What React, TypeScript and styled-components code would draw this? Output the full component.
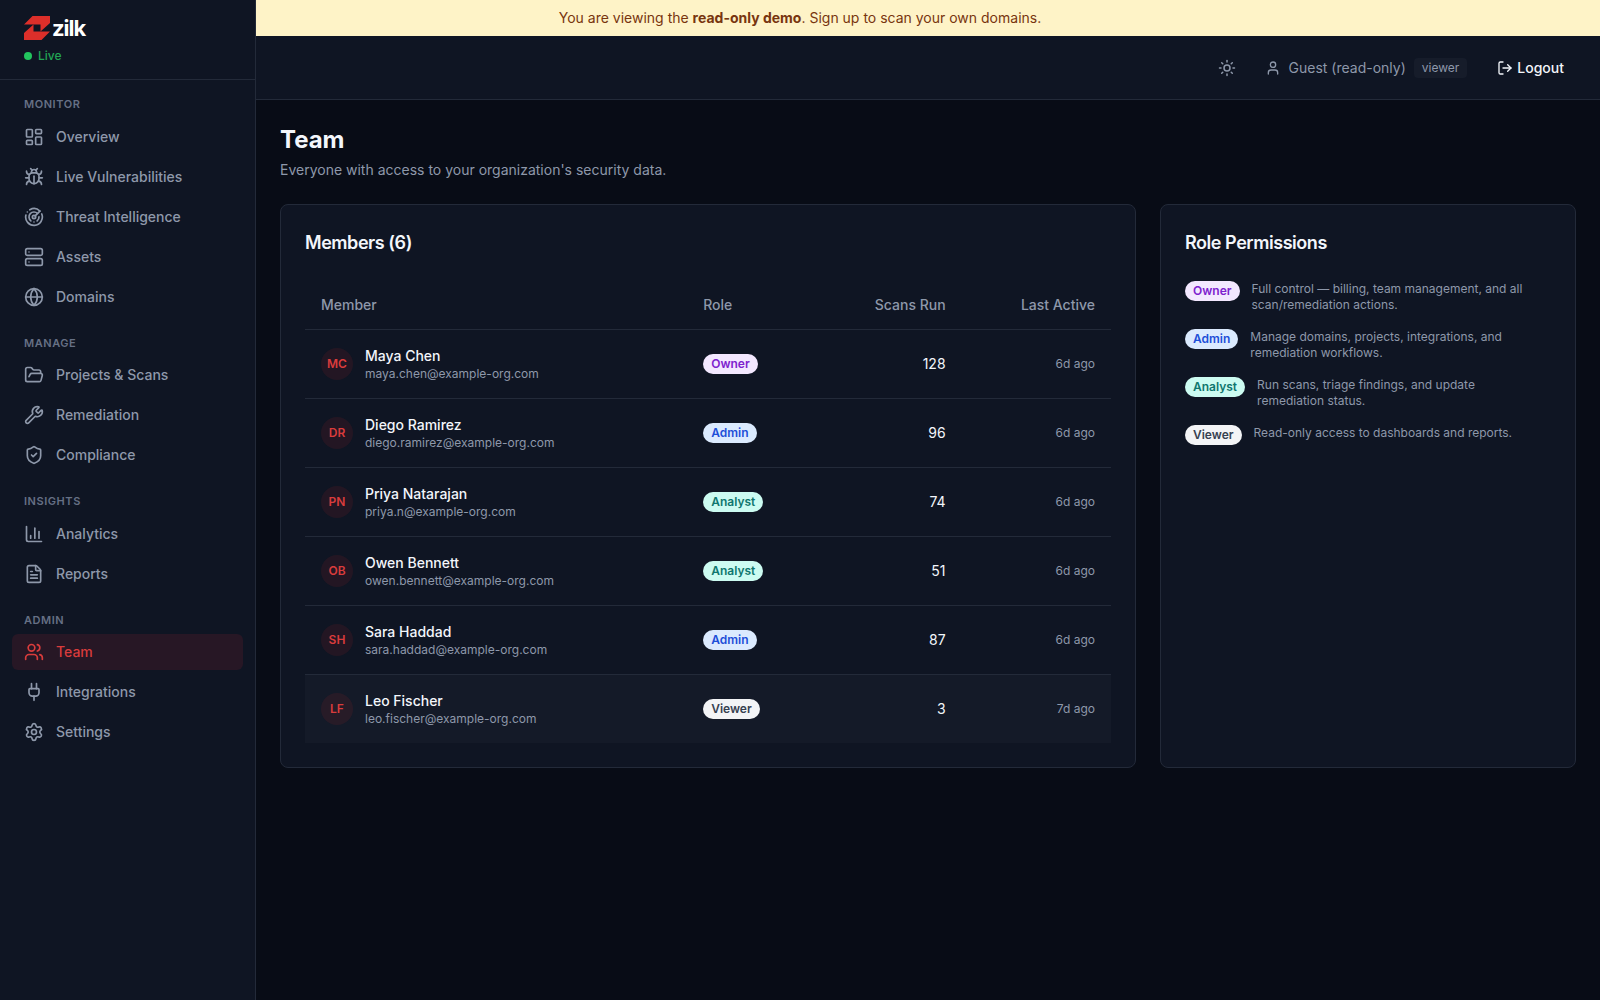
import React from "react";
import styled, { createGlobalStyle } from "styled-components";
import {
  LayoutDashboard, Bug, Radar, Server, Globe, FolderOpen, Wrench, ShieldCheck,
  ChartColumn, FileText, Users, Plug, Settings, Sun, User, LogOut, type LucideIcon,
} from "lucide-react";

const GlobalStyle = createGlobalStyle`
  *, *::before, *::after { box-sizing: border-box; }
  body {
    margin: 0;
    background: #080c16;
    color: #f3f6fb;
    font-family: Inter, "Liberation Sans", sans-serif;
    font-size: 14px;
    line-height: 20px;
  }
  h1, h2, p, ul { margin: 0; padding: 0; }
  ul { list-style: none; }
  button { font: inherit; color: inherit; background: none; border: 0; padding: 0; cursor: pointer; }
`;

const line = "#232a39";
const panel = "#0f1523";
const muted = "#8e98aa";

const Shell = styled.div`
  display: grid;
  grid-template-columns: 256px minmax(0, 1fr);
  grid-template-rows: auto 1fr;
  min-height: 100vh;
`;

const Sidebar = styled.aside`
  grid-area: 1 / 1 / 3 / 2;
  background: ${panel};
  border-right: 1px solid ${line};
`;

const Brand = styled.div`
  display: flex;
  flex-direction: column;
  gap: 8px;
  height: 80px;
  padding: 16px 24px 0;
  border-bottom: 1px solid ${line};
`;

const BrandLink = styled.a`
  display: flex;
  width: max-content;
  align-items: center;
  gap: 2px;
  height: 24px;
  color: #ffffff;
  font-size: 22px;
  font-weight: 700;
  letter-spacing: -1px;
  text-decoration: none;
`;

const Live = styled.span`
  display: flex;
  align-items: center;
  gap: 6px;
  color: #22a555;
  font-size: 12px;
  font-weight: 500;
  line-height: 16px;

  &::before {
    content: "";
    width: 8px;
    height: 8px;
    border-radius: 50%;
    background: #22c55e;
  }
`;

const Nav = styled.nav`
  display: flex;
  flex-direction: column;
  gap: 20px;
  padding: 16px 12px;
`;

const NavLabel = styled.h2`
  padding: 0 12px 6px;
  color: #667085;
  font-size: 11px;
  font-weight: 600;
  line-height: 1.5;
  letter-spacing: 0.05em;
  text-transform: uppercase;
`;

const NavList = styled.ul`
  display: flex;
  flex-direction: column;
  gap: 4px;
`;

const NavLink = styled.a<{ $active?: boolean }>`
  display: flex;
  align-items: center;
  gap: 12px;
  padding: 8px 12px;
  border-radius: 6px;
  background: ${(p) => (p.$active ? "#271725" : "transparent")};
  color: ${(p) => (p.$active ? "#d93c3c" : muted)};
  font-weight: 500;
  text-decoration: none;
`;

const Content = styled.div`
  grid-area: 2 / 2;
`;

const Banner = styled.div`
  grid-area: 1 / 1 / 2 / 3;
  padding: 8px 16px;
  background: #fef3c7;
  color: #78350f;
  text-align: center;
`;

const Header = styled.header`
  display: flex;
  align-items: center;
  justify-content: flex-end;
  gap: 18px;
  height: 64px;
  padding: 0 24px;
  background: ${panel};
  border-bottom: 1px solid ${line};
`;

const IconButton = styled.button`
  display: grid;
  place-items: center;
  width: 40px;
  height: 40px;
  color: ${muted};
`;

const Account = styled.div`
  display: flex;
  align-items: center;
  gap: 8px;
  color: ${muted};
`;

const AccountRole = styled.span`
  padding: 2px 8px;
  border-radius: 4px;
  background: #161c2a;
  font-size: 12px;
  line-height: 16px;
`;

const LogoutButton = styled.button`
  display: flex;
  align-items: center;
  gap: 4px;
  padding: 8px 12px;
  font-weight: 500;
`;

const Main = styled.main`
  padding: 24px;
`;

const Title = styled.h1`
  font-size: 24px;
  font-weight: 700;
  line-height: 32px;
`;

const Subtitle = styled.p`
  margin-top: 4px;
  color: ${muted};
`;

const Cards = styled.div`
  display: grid;
  grid-template-columns: repeat(3, minmax(0, 1fr));
  gap: 24px;
  margin-top: 24px;
`;

const Card = styled.section<{ $span?: number }>`
  grid-column: span ${(p) => p.$span ?? 1};
  padding: 24px;
  border: 1px solid ${line};
  border-radius: 8px;
  background: ${panel};
`;

const CardTitle = styled.h2`
  margin-bottom: 24px;
  font-size: 18px;
  font-weight: 600;
  line-height: 28px;
  letter-spacing: -0.025em;
`;

const Table = styled.table`
  width: 100%;
  border-collapse: collapse;
`;

const Row = styled.tr<{ $highlight?: boolean }>`
  border-bottom: 1px solid ${line};
  background: ${(p) => (p.$highlight ? "#141a28" : "transparent")};

  tbody &:last-child { border-bottom: 0; }
`;

const HeadCell = styled.th<{ $right?: boolean }>`
  height: 48px;
  padding: 0 16px;
  color: ${muted};
  font-weight: 500;
  text-align: ${(p) => (p.$right ? "right" : "left")};
`;

const Cell = styled.td<{ $right?: boolean; $quiet?: boolean }>`
  padding: 16px;
  color: ${(p) => (p.$quiet ? muted : "inherit")};
  font-size: ${(p) => (p.$quiet ? "12px" : "14px")};
  text-align: ${(p) => (p.$right ? "right" : "left")};
`;

const Person = styled.div`
  display: flex;
  align-items: center;
  gap: 12px;
  padding-right: 6px;
`;

const Avatar = styled.span`
  display: grid;
  place-items: center;
  width: 32px;
  height: 32px;
  border-radius: 50%;
  background: rgba(220, 38, 38, 0.1);
  color: #d93c3c;
  font-size: 12px;
  font-weight: 600;
`;

const Name = styled.p`
  font-weight: 500;
`;

const Email = styled.p`
  color: ${muted};
  font-size: 12px;
  line-height: 16px;
`;

type Role = "Owner" | "Admin" | "Analyst" | "Viewer";

const roleColors: Record<Role, [string, string]> = {
  Owner: ["#f3e8ff", "#7e22ce"],
  Admin: ["#dbeafe", "#1d4ed8"],
  Analyst: ["#ccfbf1", "#0f766e"],
  Viewer: ["#f3f4f6", "#374151"],
};

const Badge = styled.span<{ $role: Role }>`
  display: inline-block;
  flex: none;
  padding: 2px 8px;
  border-radius: 10px;
  background: ${(p) => roleColors[p.$role][0]};
  color: ${(p) => roleColors[p.$role][1]};
  font-size: 12px;
  font-weight: 600;
  line-height: 16px;
  vertical-align: middle;
`;

const Permissions = styled.ul`
  display: flex;
  flex-direction: column;
  gap: 16px;
`;

const Permission = styled.li`
  display: flex;
  align-items: flex-start;
  gap: 12px;
  padding-right: 16px;
  color: ${muted};
  font-size: 12px;
  line-height: 16px;
`;

const sections: { label: string; items: [string, LucideIcon][] }[] = [
  { label: "Monitor", items: [["Overview", LayoutDashboard], ["Live Vulnerabilities", Bug], ["Threat Intelligence", Radar], ["Assets", Server], ["Domains", Globe]] },
  { label: "Manage", items: [["Projects & Scans", FolderOpen], ["Remediation", Wrench], ["Compliance", ShieldCheck]] },
  { label: "Insights", items: [["Analytics", ChartColumn], ["Reports", FileText]] },
  { label: "Admin", items: [["Team", Users], ["Integrations", Plug], ["Settings", Settings]] },
];

const members: { name: string; initials: string; email: string; role: Role; scans: number; active: string }[] = [
  { name: "Maya Chen", initials: "MC", email: "maya.chen@example-org.com", role: "Owner", scans: 128, active: "6d ago" },
  { name: "Diego Ramirez", initials: "DR", email: "diego.ramirez@example-org.com", role: "Admin", scans: 96, active: "6d ago" },
  { name: "Priya Natarajan", initials: "PN", email: "priya.n@example-org.com", role: "Analyst", scans: 74, active: "6d ago" },
  { name: "Owen Bennett", initials: "OB", email: "owen.bennett@example-org.com", role: "Analyst", scans: 51, active: "6d ago" },
  { name: "Sara Haddad", initials: "SH", email: "sara.haddad@example-org.com", role: "Admin", scans: 87, active: "6d ago" },
  { name: "Leo Fischer", initials: "LF", email: "leo.fischer@example-org.com", role: "Viewer", scans: 3, active: "7d ago" },
];

const permissions: [Role, string][] = [
  ["Owner", "Full control — billing, team management, and all scan/remediation actions."],
  ["Admin", "Manage domains, projects, integrations, and remediation workflows."],
  ["Analyst", "Run scans, triage findings, and update remediation status."],
  ["Viewer", "Read-only access to dashboards and reports."],
];

const LogoMark = () => (
  <svg width="26" height="24" viewBox="0 0 26 24" fill="#dc2f2a" aria-hidden="true">
    <path d="M8.5 0H26V7L16.5 15.5V8.5H0Z" />
    <path d="M17.5 24H0V17L9.5 8.5V15.5H26Z" />
  </svg>
);

export default function App() {
  return (
    <Shell>
      <GlobalStyle />
      <Banner>You are viewing the <strong>read-only demo</strong>. Sign up to scan your own domains.</Banner>
      <Sidebar>
        <Brand>
          <BrandLink href="#"><LogoMark />zilk</BrandLink>
          <Live>Live</Live>
        </Brand>
        <Nav>
          {sections.map((section) => (
            <div key={section.label}>
              <NavLabel>{section.label}</NavLabel>
              <NavList>
                {section.items.map(([label, Icon]) => (
                  <li key={label}>
                    <NavLink href="#" $active={label === "Team"}><Icon size={20} />{label}</NavLink>
                  </li>
                ))}
              </NavList>
            </div>
          ))}
        </Nav>
      </Sidebar>
      <Content>
        <Header>
          <IconButton aria-label="Toggle theme"><Sun size={18} /></IconButton>
          <Account><User size={16} />Guest (read-only)<AccountRole>viewer</AccountRole></Account>
          <LogoutButton><LogOut size={16} />Logout</LogoutButton>
        </Header>
        <Main>
          <Title>Team</Title>
          <Subtitle>Everyone with access to your organization's security data.</Subtitle>
          <Cards>
            <Card $span={2}>
              <CardTitle>Members (6)</CardTitle>
              <Table>
                <thead>
                  <Row>
                    <HeadCell>Member</HeadCell>
                    <HeadCell>Role</HeadCell>
                    <HeadCell $right>Scans Run</HeadCell>
                    <HeadCell $right>Last Active</HeadCell>
                  </Row>
                </thead>
                <tbody>
                  {members.map((m) => (
                    <Row key={m.name} $highlight={m.name === "Leo Fischer"}>
                      <Cell>
                        <Person>
                          <Avatar>{m.initials}</Avatar>
                          <div><Name>{m.name}</Name><Email>{m.email}</Email></div>
                        </Person>
                      </Cell>
                      <Cell><Badge $role={m.role}>{m.role}</Badge></Cell>
                      <Cell $right>{m.scans}</Cell>
                      <Cell $right $quiet>{m.active}</Cell>
                    </Row>
                  ))}
                </tbody>
              </Table>
            </Card>
            <Card>
              <CardTitle>Role Permissions</CardTitle>
              <Permissions>
                {permissions.map(([role, text]) => (
                  <Permission key={role}><Badge $role={role}>{role}</Badge><p>{text}</p></Permission>
                ))}
              </Permissions>
            </Card>
          </Cards>
        </Main>
      </Content>
    </Shell>
  );
}
